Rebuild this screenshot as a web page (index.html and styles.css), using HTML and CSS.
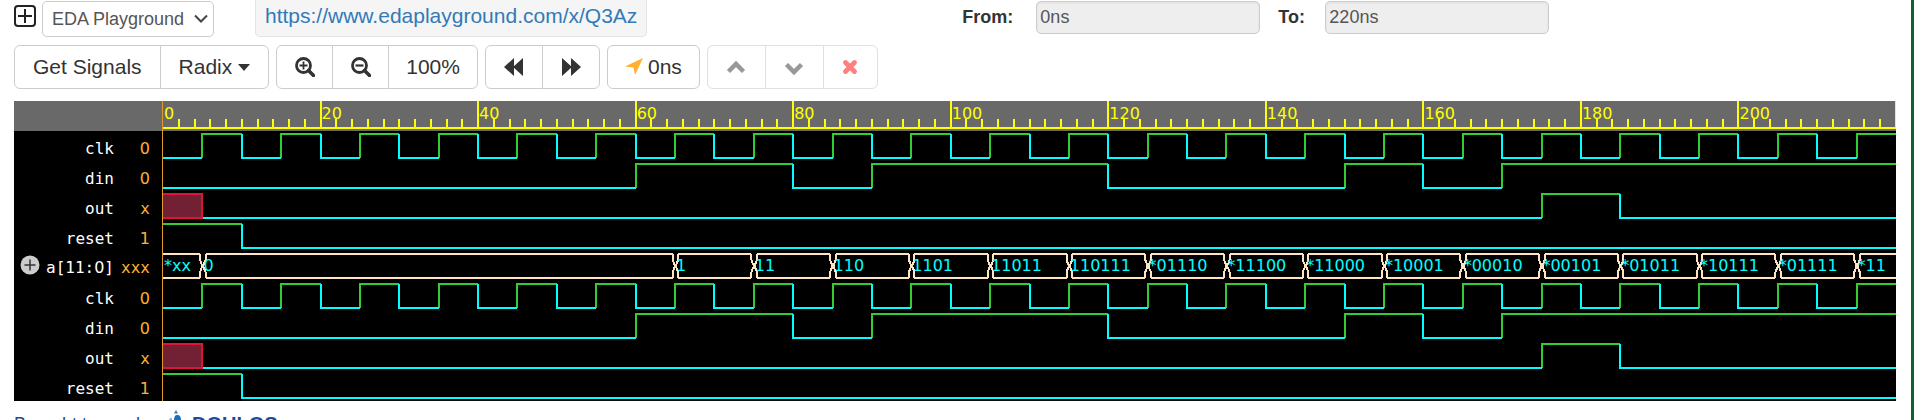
FILE: index.html
```
<!DOCTYPE html>
<html lang="en">
<head>
<meta charset="utf-8">
<title>EPWave</title>
<link rel="stylesheet" href="styles.css">
</head>
<body>
<main class="page">
  <header class="topbar">
    <button class="expand" type="button" aria-label="Expand">
      <svg width="22" height="22" viewBox="0 0 22 22"><rect x="1" y="1" width="20" height="20" rx="3" fill="none" stroke="#222" stroke-width="2"/><path d="M11 4v14M4 11h14" stroke="#222" stroke-width="2"/></svg>
    </button>
    <div class="picker">
      <select class="select" aria-label="Source"><option>EDA Playground</option></select>
      <svg class="picker-arrow" width="14" height="10" viewBox="0 0 14 10"><path d="M1 1.500l6 6 6-6" fill="none" stroke="#444" stroke-width="2"/></svg>
    </div>
    <div class="linkbox"><a class="link" href="#">https://www.edaplayground.com/x/Q3Az</a></div>
    <form class="range">
      <label class="label label-from" for="from">From:</label>
      <input class="input" id="from" value="0ns" readonly>
      <label class="label label-to" for="to">To:</label>
      <input class="input" id="to" value="220ns" readonly>
    </form>
  </header>

  <nav class="toolbar">
    <div class="group">
      <button class="btn" type="button">Get Signals</button>
      <button class="btn btn-radix" type="button">Radix <svg width="12" height="7" viewBox="0 0 12 7"><path d="M0 0h12L6 7z" fill="#333"/></svg></button>
    </div>
    <div class="group group-zoom">
      <button class="btn" type="button" aria-label="Zoom in"><svg width="20" height="20" viewBox="0 0 20 20"><circle cx="8.500" cy="8.500" r="7" fill="none" stroke="#333" stroke-width="2.800"/><path d="M13.500 13.500l5 5" stroke="#333" stroke-width="3.600" stroke-linecap="round"/><path d="M8.500 4.500v8M4.500 8.500h8" stroke="#333" stroke-width="1.800"/></svg></button>
      <button class="btn" type="button" aria-label="Zoom out"><svg width="20" height="20" viewBox="0 0 20 20"><circle cx="8.500" cy="8.500" r="7" fill="none" stroke="#333" stroke-width="2.800"/><path d="M13.500 13.500l5 5" stroke="#333" stroke-width="3.600" stroke-linecap="round"/><path d="M4.500 8.500h8" stroke="#333" stroke-width="2.200"/></svg></button>
      <button class="btn" type="button">100%</button>
    </div>
    <div class="group">
      <button class="btn" type="button" aria-label="Back"><svg width="20" height="18" viewBox="0 0 20 18"><path d="M10 0v18L0 9zM19 0v18L9 9z" fill="#333"/></svg></button>
      <button class="btn" type="button" aria-label="Forward"><svg width="20" height="18" viewBox="0 0 20 18"><path d="M1 0v18l10-9zM10 0v18l10-9z" fill="#333"/></svg></button>
    </div>
    <div class="group">
      <button class="btn btn-time" type="button"><svg width="18" height="18" viewBox="0 0 18 18"><path d="M18 0L10 17 8.500 9.500 0 8.500z" fill="#ffb032"/></svg> 0ns</button>
    </div>
    <div class="group group-off">
      <button class="btn" type="button" disabled aria-label="Up"><svg width="20" height="20" viewBox="0 0 20 20"><path d="M2.500 14.500L10 7l7.500 7.500" fill="none" stroke="#333" stroke-width="4.500"/></svg></button>
      <button class="btn" type="button" disabled aria-label="Down"><svg width="20" height="20" viewBox="0 0 20 20"><path d="M2.500 7.500L10 15l7.500-7.500" fill="none" stroke="#333" stroke-width="4.500"/></svg></button>
      <button class="btn btn-x" type="button" disabled aria-label="Remove"><svg width="16" height="16" viewBox="0 0 16 16"><path d="M3.500 3.500l9 9M12.500 3.500l-9 9" stroke="red" stroke-width="4.800" stroke-linecap="round"/></svg></button>
    </div>
  </nav>

  <section class="viewer">
    <div class="names">
      <div class="names-head"></div>
      <div class="name"><span>clk</span><span class="val">0</span></div>
      <div class="name"><span>din</span><span class="val">0</span></div>
      <div class="name"><span>out</span><span class="val mono">x</span></div>
      <div class="name"><span>reset</span><span class="val">1</span></div>
      <div class="name name-bus"><button class="plus" type="button" aria-label="Expand a"><svg width="20" height="20" viewBox="0 0 20 20"><circle cx="10" cy="10" r="9.500" fill="#ccc"/><path d="M10 4.500v11M4.500 10h11" stroke="#333" stroke-width="1.500"/></svg></button><span>a[11:<span class="digit">0</span>]</span><span class="val mono">xxx</span></div>
      <div class="name"><span>clk</span><span class="val">0</span></div>
      <div class="name"><span>din</span><span class="val">0</span></div>
      <div class="name"><span>out</span><span class="val mono">x</span></div>
      <div class="name"><span>reset</span><span class="val">1</span></div>
    </div>
    <div class="waves">
      <div class="ruler" id="ruler"></div>
      <div id="rows"></div>
    </div>
  </section>

  <footer class="footer">
    <a class="credit" href="#">Brought to you by</a>
    <svg class="drop" width="16" height="24" viewBox="0 0 16 24"><path d="M8 0l2 3.500H6z" fill="#2a7fc4"/><path d="M9 5c3 0 4 2 4 5l2 13H5l1-13c0-3 1-5 3-5z" fill="#1a6fb8"/><path d="M2 8h2v4H0z" fill="#8ab8de"/></svg>
    <strong class="brand">DOULOS</strong>
  </footer>
</main>
<script src="waves.js"></script>
</body>
</html>
```

FILE: styles.css
```
* { box-sizing: border-box; }

body {
  margin: 0;
  height: 100vh;
  overflow: hidden;
  background: #fff;
  color: #333;
  font-family: "Liberation Sans", Arial, sans-serif;
  font-size: 18px;
}

.page {
  min-height: 100vh;
  padding: 0 15px 0 14px;
  border-right: 3px solid #0b6530;
}

/* Top bar */
.topbar { display: flex; height: 37px; align-items: flex-start; }

.expand {
  display: flex;
  margin: 5px 6px 0 0;
  padding: 0;
  border: 0;
  background: none;
}

.picker { display: grid; width: 172px; margin-top: 1px; align-items: center; }

.select {
  grid-area: 1 / 1;
  width: 100%;
  height: 36px;
  padding: 0 9px;
  border: 1px solid #ccc;
  border-radius: 5px;
  appearance: none;
  background: #fff;
  color: #555;
  font: 18px "Liberation Sans", Arial, sans-serif;
}

.picker-arrow { grid-area: 1 / 1; justify-self: end; margin-right: 6px; pointer-events: none; }

.linkbox {
  height: 37px;
  margin-left: 41px;
  padding: 0 9px;
  border: 1px solid #e3e3e3;
  border-top: 0;
  border-radius: 0 0 5px 5px;
  background: #f5f5f5;
  font-size: 21px;
  line-height: 32px;
}

.link { color: #337ab7; text-decoration: none; }

.range { display: flex; margin: 1px 0 0 315px; }
.label { font-weight: bold; line-height: 32px; }
.label-from { width: 74px; }
.label-to { width: 47px; margin-left: 18px; }

.input {
  width: 224px;
  height: 33px;
  padding: 0 3px;
  border: 1px solid #ccc;
  border-radius: 5px;
  background: #eee;
  box-shadow: inset 0 1px 2px #ddd;
  color: #555;
  font: 18px "Liberation Sans", Arial, sans-serif;
}

/* Toolbar */
.toolbar { display: flex; gap: 7px; margin-top: 8px; }
.group { display: flex; }

.btn {
  display: flex;
  align-items: center;
  justify-content: center;
  gap: 5px;
  min-width: 58px;
  height: 44px;
  margin-left: -1px;
  padding: 0 18px;
  border: 1px solid #ccc;
  background: #fff;
  color: #333;
  font: 21px "Liberation Sans", Arial, sans-serif;
}

.btn:first-child { margin-left: 0; border-radius: 6px 0 0 6px; }
.btn:last-child { border-radius: 0 6px 6px 0; }
.btn:only-child { border-radius: 6px; }
.group-zoom .btn { min-width: 57px; padding: 0 17px; }
.btn-radix { gap: 6px; }
.btn-time { padding: 0 17px; }
.group-off .btn { min-width: 59px; border-color: #e0e0e0; }
.group-off .btn-x { min-width: 55px; }
.group-off svg { opacity: .5; }

/* Waveform viewer */
.viewer {
  display: flex;
  margin-top: 12px;
  background: #000;
  font-family: "DejaVu Sans Mono", monospace;
  font-size: 16px;
}

.names { flex: none; width: 149px; border-right: 1px solid #e09a2c; color: #fff; }
.names-head { height: 30px; background: #696969; }

.name {
  display: flex;
  justify-content: flex-end;
  height: 30px;
  padding: 4px 12px 0 0;
  line-height: 28px;
}

.name-bus { align-items: center; line-height: 26px; }
.val { width: 36px; color: #ffb032; font-family: "DejaVu Sans", sans-serif; text-align: right; }
.mono { font-family: "DejaVu Sans Mono", monospace; }
.digit { font-family: "DejaVu Sans", sans-serif; }
.plus { display: flex; margin-right: auto; margin-left: 6px; padding: 0 0 6px; border: 0; background: none; }

.waves { flex: 1; min-width: 0; }

.ruler { display: grid; height: 30px; background: #696969; color: #ff0; }
.ruler-svg, .ruler-labels, .wave-svg, .bus-labels { grid-area: 1 / 1; }
.ruler-svg { width: 100%; height: 30px; }
.ruler-labels { display: flex; font-family: "DejaVu Sans", sans-serif; font-size: 16px; line-height: 25px; }
.ruler-label { flex: 1 1 0; min-width: 0; padding-left: 1px; }

.wave { display: grid; height: 30px; }
.wave-svg { width: 100%; height: 30px; }
.wave-svg path, .ruler-svg path { fill: none; stroke-width: 2; vector-effect: non-scaling-stroke; shape-rendering: crispEdges; }

.ruler-svg .tick { stroke: #ff0; }
.wave-svg .hi { stroke: #32cd32; }
.wave-svg .lo { stroke: #0ff; }
.wave-svg .unk { fill: #722034; stroke: #dc143c; }
.wave-svg .bus { stroke: #ffe4c4; }

.bus-labels { display: flex; color: #0ff; font-family: "DejaVu Sans", sans-serif; font-size: 16px; line-height: 30px; }
.bus-label { min-width: 0; overflow: hidden; padding-left: 1px; white-space: nowrap; }

/* Footer */
.footer { display: flex; margin-top: 9px; color: #1b4b9b; white-space: nowrap; }
.credit { margin-top: 4px; color: #1b4b9b; text-decoration: none; }
.drop { margin-left: 13px; }
.brand { margin: 3px 0 0 8px; font-size: 20px; }
```

FILE: waves.js
```
const END = 220;
const HIGH = 3;
const LOW = 27;

const svg = (cls, body) =>
  `<svg class="${cls}" viewBox="0 0 ${END} 30" preserveAspectRatio="none">${body}</svg>`;

/* Ruler: minor ticks every 2ns, major ticks every 20ns */
let ticks = `M0 27H${END}`;
for (let t = 2; t <= END; t += 2) ticks += `M${t} ${t % 20 ? 18 : 0}V27`;
let labels = "";
for (let t = 0; t < END; t += 20) labels += `<span class="ruler-label">${t}</span>`;
document.getElementById("ruler").innerHTML =
  svg("ruler-svg", `<path class="tick" d="${ticks}"/>`) + `<div class="ruler-labels">${labels}</div>`;

/* A signal is a list of [time, level] changes */
function wave(changes) {
  let hi = "", lo = "", unk = "";
  changes.forEach(([t, v], i) => {
    const end = i + 1 < changes.length ? changes[i + 1][0] : END;
    const edge = i && changes[i - 1][1] !== "x";
    if (v === "x") unk += `M${t} ${HIGH}H${end}V${LOW}H${t}`;
    else if (v) hi += edge ? `M${t} ${LOW}V${HIGH}H${end}` : `M${t} ${HIGH}H${end}`;
    else lo += edge ? `M${t} ${HIGH}V${LOW}H${end}` : `M${t} ${LOW}H${end}`;
  });
  return `<div class="wave">${svg("wave-svg",
    `<path class="hi" d="${hi}"/><path class="lo" d="${lo}"/><path class="unk" d="${unk}"/>`)}</div>`;
}

/* A bus is a list of [time, text] changes, drawn as cells with notched ends */
function bus(changes) {
  let d = "", text = "";
  changes.forEach(([t, v], i) => {
    const last = i + 1 === changes.length;
    const end = last ? END : changes[i + 1][0];
    const a = i ? t + 0.4 : t;
    const b = last ? end : end - 0.3;
    d += `M${a} ${HIGH}H${b}M${a} ${LOW}H${b}`;
    if (i) d += `M${a} ${HIGH}V9L${t + 0.1} 15L${a} 21V${LOW}`;
    if (!last) d += `M${b} ${HIGH}V9L${end} 15L${b} 21V${LOW}`;
    text += `<span class="bus-label" style="width:${(end - t) / END * 100}%">${v}</span>`;
  });
  return `<div class="wave">${svg("wave-svg", `<path class="bus" d="${d}"/>`)}<div class="bus-labels">${text}</div></div>`;
}

const clk = [];
for (let t = 0; t < END; t += 5) clk.push([t, (t / 5) % 2]);
const din = [[0, 0], [60, 1], [80, 0], [90, 1], [120, 0], [150, 1], [160, 0], [170, 1]];
const out = [[0, "x"], [5, 0], [175, 1], [185, 0]];
const reset = [[0, 1], [10, 0]];
const a = [[0, "*xx"], [5, "0"], [65, "1"], [75, "11"], [85, "110"], [95, "1101"], [105, "11011"],
  [115, "110111"], [125, "*01110"], [135, "*11100"], [145, "*11000"], [155, "*10001"], [165, "*00010"],
  [175, "*00101"], [185, "*01011"], [195, "*10111"], [205, "*01111"], [215, "*11"]];

const group = [clk, din, out, reset].map(wave).join("");
document.getElementById("rows").innerHTML = group + bus(a) + group;
```
